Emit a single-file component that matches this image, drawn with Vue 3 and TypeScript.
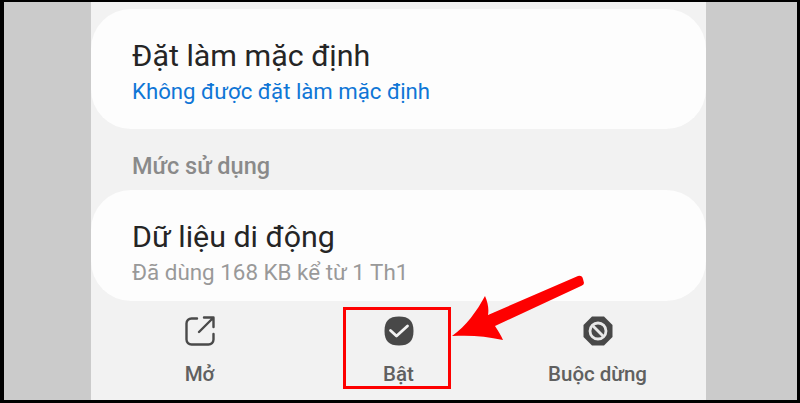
<script setup lang="ts">
interface Action {
  label: string
  icon: 'open' | 'check' | 'stop'
}
const actions: Action[] = [
  { label: 'Mở', icon: 'open' },
  { label: 'Bật', icon: 'check' },
  { label: 'Buộc dừng', icon: 'stop' },
]
</script>

<template>
  <div class="frame">
    <div class="side"></div>
    <main class="phone">
      <section class="card first">
        <div class="title">Đặt làm mặc định</div>
        <div class="sub link">Không được đặt làm mặc định</div>
      </section>
      <div class="section">Mức sử dụng</div>
      <section class="card second">
        <div class="title">Dữ liệu di động</div>
        <div class="sub muted">Đã dùng 168 KB kể từ 1 Th1</div>
      </section>
      <nav class="actions">
        <div v-for="a in actions" :key="a.label" class="action">
          <svg class="icon" viewBox="0 0 30 30" width="30" height="30">
            <template v-if="a.icon === 'open'">
              <path d="M12 2.500H6.500A5 5 0 0 0 1.500 7.500V23.500A5 5 0 0 0 6.500 28.500H23.500A5 5 0 0 0 28.500 23.500V18" fill="none" stroke="#4a4a4a" stroke-width="2.400" stroke-linecap="round" />
              <path d="M19 1.500H28.500V11M28 2L14 16" fill="none" stroke="#4a4a4a" stroke-width="2.400" stroke-linecap="round" stroke-linejoin="round" />
            </template>
            <template v-else-if="a.icon === 'check'">
              <path d="M15 .5C25 .5 29.500 5 29.500 15S25 29.500 15 29.500 .5 25 .5 15 5 .5 15 .5Z" fill="#484848" />
              <path d="M6.500 14.500L12.500 20L23.500 10" fill="none" stroke="#f2f2f2" stroke-width="2.800" stroke-linecap="round" stroke-linejoin="round" />
            </template>
            <template v-else>
              <path d="M9 .5H21L29.500 9V21L21 29.500H9L.5 21V9Z" fill="#484848" />
              <circle cx="15" cy="15" r="8" fill="none" stroke="#e8e8e8" stroke-width="2.800" />
              <path d="M10 10L20 20" stroke="#e8e8e8" stroke-width="2.800" />
            </template>
          </svg>
          <span class="label">{{ a.label }}</span>
        </div>
      </nav>
    </main>
    <div class="side"></div>

    <div class="highlight"></div>
    <svg class="arrow" viewBox="0 0 800 403" width="800" height="403">
      <path d="M452 336C466 326 477 311 485 296C488 303 489 309 488 315L578 276Q582 275 583 279L584 283Q584 285 581 286L495 326C498 331 501 335 503 340C486 336 470 335 452 336Z" fill="#fe0000" />
    </svg>
  </div>
</template>

<style>
html,
body {
  margin: 0;
  background: #000;
}
</style>

<style scoped>
.frame {
  position: relative;
  box-sizing: border-box;
  width: 800px;
  height: 403px;
  display: flex;
  overflow: hidden;
  border-style: solid;
  border-color: #000;
  border-width: 2px 3px 3px 4px;
  background: #cbcbcb;
  font-family: Roboto, "Noto Sans", sans-serif;
}
.side {
  flex: 1 1 0;
  background: #cbcbcb;
}
.side:first-child {
  flex: 0 0 87px;
}
.phone {
  flex: 0 0 615px;
  display: flex;
  flex-direction: column;
  padding-top: 7px;
  background: #f2f2f2;
}
.card {
  box-sizing: border-box;
  padding-left: 41px;
  background: #fdfdfd;
}
.first {
  height: 120px;
  padding-top: 29px;
  border-radius: 40px;
}
.second {
  height: 111px;
  padding-top: 29px;
  border-radius: 40px;
}
.title {
  font-size: 30.400px;
  line-height: 36px;
  color: #252525;
}
.sub {
  font-size: 22.200px;
  line-height: 26px;
  margin-top: 4px;
}
.link {
  color: #0f76d6;
}
.muted {
  color: #999;
  font-size: 22.400px;
}
.section {
  height: 61px;
  box-sizing: border-box;
  padding: 24px 0 0 41px;
  font-size: 23.500px;
  line-height: 26px;
  font-weight: 500;
  color: #8a8a8a;
}
.actions {
  flex: 1;
  display: grid;
  grid-template-columns: 1fr 1fr 1fr;
  margin-top: 14px;
  padding: 0 9px;
}
.action {
  display: flex;
  flex-direction: column;
  align-items: center;
}
.icon {
  display: block;
  margin-top: 1px;
}
.label {
  margin-top: 16px;
  font-size: 20.500px;
  line-height: 24px;
  font-weight: 500;
  color: #606060;
}
.highlight {
  position: absolute;
  left: 339px;
  top: 305px;
  box-sizing: border-box;
  width: 108px;
  height: 82px;
  border: 3px solid #fe0000;
}
.arrow {
  position: absolute;
  left: -4px;
  top: -2px;
  pointer-events: none;
}
</style>
